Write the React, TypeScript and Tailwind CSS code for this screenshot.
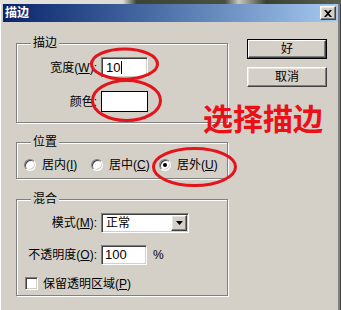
import React from "react";

const sunken =
  "border border-t-[#808080] border-l-[#808080] border-b-white border-r-white shadow-[inset_1px_1px_0_#404040,inset_-1px_-1px_0_#d4d0c8] bg-white";
const raised =
  "border border-t-white border-l-white border-b-[#404040] border-r-[#404040] shadow-[inset_-1px_-1px_0_#808080,inset_1px_1px_0_#e8e6e0] bg-[#d4d0c8]";

function Group({ title, h, className = "", children }: { title: string; h: string; className?: string; children?: React.ReactNode }) {
  return (
    <div className={`relative border border-[#808080] shadow-[inset_1px_1px_0_#fff,1px_1px_0_#fff] ${h} ${className}`}>
      <span className="absolute left-[14px] -top-[9px] px-[2px] bg-[#d4d0c8] text-[12px] leading-[16px] text-black">{title}</span>
      {children}
    </div>
  );
}

function Radio({ checked, label, k, w }: { checked?: boolean; label: string; k: string; w: string }) {
  return (
    <div className={`flex items-center ${w}`}>
      <span className="relative w-[12px] h-[12px] rounded-full border border-t-[#808080] border-l-[#808080] border-b-white border-r-white bg-white shadow-[inset_1px_1px_0_#404040,inset_-1px_-1px_0_#d4d0c8] flex items-center justify-center">
        {checked && <span className="w-[4px] h-[4px] rounded-full bg-black" />}
      </span>
      <span className="ml-[6px] text-[12px] leading-[14px]">
        {label}(<span className="underline">{k}</span>)
      </span>
    </div>
  );
}

export default function App() {
  return (
    <div
      className="relative w-[341px] h-[310px] overflow-hidden bg-[#d4d0c8] text-black shadow-[inset_1px_0_0_#fff,inset_-1px_0_0_#404040,inset_-3px_0_0_#808080]"
      style={{ fontFamily: '"Liberation Sans", "Noto Sans CJK SC", sans-serif' }}
    >
      <div className="h-[4px] bg-[linear-gradient(90deg,#e4e4dc_0%,#dcdcd4_36%,#3c4434_40%,#4a5040_66%,#c8c8c0_70%,#3a4032_78%,#5a6050_100%)]" />
      <div className="mx-[3px] h-[18px] flex items-center justify-between bg-linear-to-r from-[#0a246a] to-[#a6caf0] pl-[2px] pr-[2px]">
        <span className="text-white font-bold text-[12px] leading-[16px]">描边</span>
        <div className={`w-[16px] h-[14px] flex items-center justify-center ${raised}`}>
          <svg width="8" height="7" viewBox="0 0 8 7">
            <path d="M0 0h2l2 2 2-2h2L5 3.5 8 7H6L4 5 2 7H0l3-3.5z" fill="#000" />
          </svg>
        </div>
      </div>

      <div className="flex pl-[16px]">
        <div className="pt-[21px] w-[212px]">
          <Group title="描边" h="h-[80px]">
            <div className="mt-[13px] flex items-center h-[21px]">
              <span className="w-[80px] text-right text-[12px] leading-[14px]">
                宽度(<span className="underline">W</span>):
              </span>
              <div className={`ml-[4px] w-[47px] h-[21px] flex items-center pl-[4px] text-[13px] ${sunken}`}>
                10<span className="ml-[1px] w-[1px] h-[13px] bg-black" />
              </div>
            </div>
            <div className="mt-[13px] flex items-center h-[21px]">
              <span className="w-[80px] text-right text-[12px] leading-[14px]">颜色:</span>
              <div className="ml-[4px] w-[47px] h-[21px] border border-black bg-white" />
            </div>
          </Group>

          <Group title="位置" h="h-[37px]" className="mt-[19px]">
            <div className="mt-[15px] h-[14px] flex items-center pl-[7px]">
              <Radio label="居内" k="I" w="w-[67px]" />
              <Radio label="居中" k="C" w="w-[68px]" />
              <Radio label="居外" k="U" w="w-[60px]" checked />
            </div>
          </Group>

          <Group title="混合" h="h-[97px]" className="mt-[20px]">
            <div className="mt-[13px] flex items-center h-[20px]">
              <span className="w-[80px] text-right text-[12px] leading-[14px]">
                模式(<span className="underline">M</span>):
              </span>
              <div className={`ml-[4px] w-[88px] h-[20px] flex items-center justify-between pl-[4px] pr-[1px] text-[12px] ${sunken}`}>
                <span>正常</span>
                <div className={`w-[16px] h-[16px] flex items-center justify-center ${raised}`}>
                  <svg width="7" height="4" viewBox="0 0 7 4">
                    <path d="M0 0h7L3.5 4z" fill="#000" />
                  </svg>
                </div>
              </div>
            </div>
            <div className="mt-[12px] flex items-center h-[20px]">
              <span className="w-[80px] text-right text-[12px] leading-[14px]">
                不透明度(<span className="underline">O</span>):
              </span>
              <div className={`ml-[4px] w-[46px] h-[20px] flex items-center pl-[3px] text-[13px] ${sunken}`}>100</div>
              <span className="ml-[6px] text-[12px]">%</span>
            </div>
            <div className="mt-[12px] flex items-center h-[13px] pl-[8px]">
              <span className={`w-[13px] h-[13px] ${sunken}`} />
              <span className="ml-[5px] text-[12px] leading-[14px]">
                保留透明区域(<span className="underline">P</span>)
              </span>
            </div>
          </Group>
        </div>

        <div className="pt-[17px] ml-[19px] w-[80px] flex flex-col">
          <div className="h-[20px] border border-black">
            <div className="w-full h-full flex items-center justify-center text-[12px] border border-t-white border-l-white border-b-[#404040] border-r-[#404040] shadow-[inset_-1px_-1px_0_#808080]">
              好
            </div>
          </div>
          <div className={`mt-[8px] h-[20px] flex items-center justify-center text-[12px] ${raised}`}>取消</div>
        </div>
      </div>

      <div
        className="absolute left-[203px] top-[102px] text-[30px] font-bold leading-none text-[#ea1016]"
        style={{ fontFamily: '"Noto Sans CJK SC", sans-serif' }}
      >
        选择描边
      </div>

      <svg className="absolute inset-0 pointer-events-none" width="341" height="310" viewBox="0 0 341 310">
        <ellipse cx="124.5" cy="64" rx="33" ry="15" fill="none" stroke="#e3141b" strokeWidth="3" />
        <ellipse cx="126.5" cy="100.5" rx="34" ry="20" fill="none" stroke="#e3141b" strokeWidth="3" />
        <ellipse cx="194.5" cy="167" rx="41" ry="18.5" fill="none" stroke="#e3141b" strokeWidth="3" />
      </svg>
    </div>
  );
}
